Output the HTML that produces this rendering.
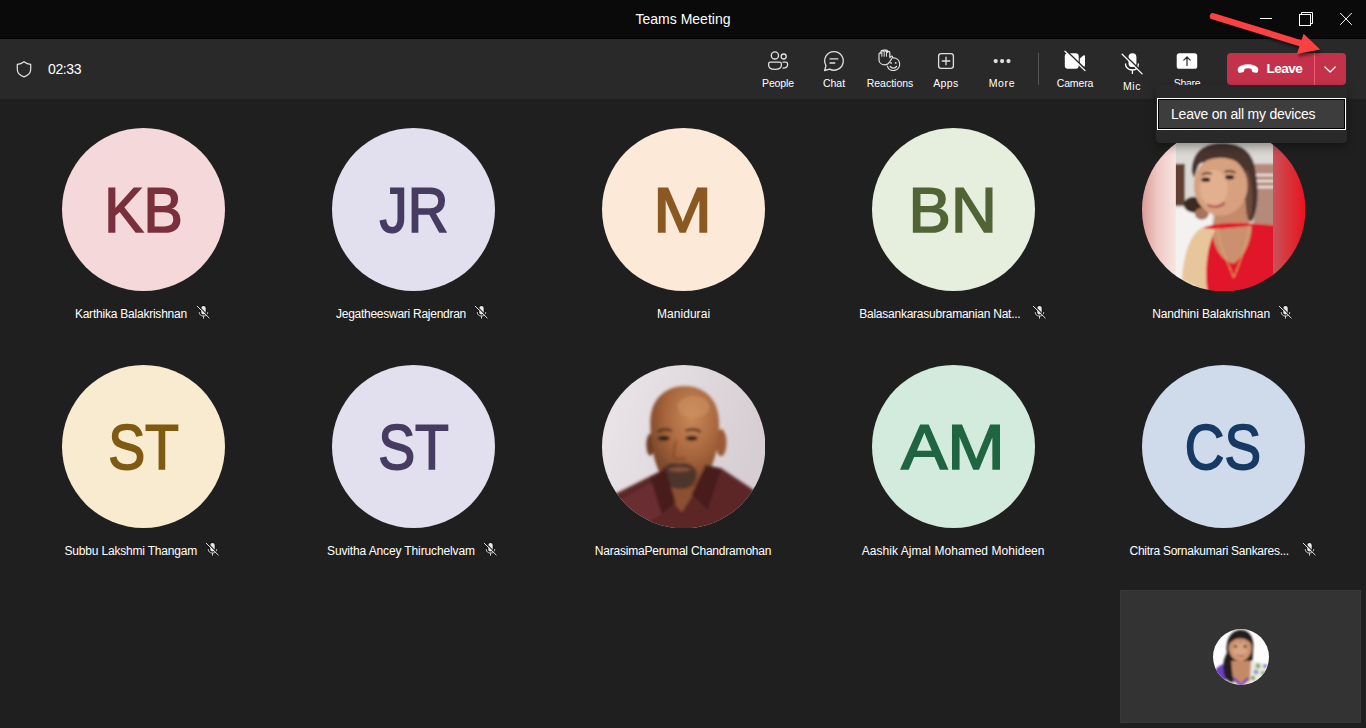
<!DOCTYPE html>
<html lang="en">
<head>
<meta charset="utf-8">
<title>Teams Meeting</title>
<style>
*{box-sizing:border-box;margin:0;padding:0}
html,body{width:1366px;height:728px;overflow:hidden;background:#1f1f1f;font-family:"Liberation Sans",sans-serif;color:#fff}
.abs{position:absolute}
#titlebar{left:0;top:0;width:1366px;height:39px;background:#0a0a0a;border-bottom:1px solid #000}
#title{left:583px;top:10px;width:200px;text-align:center;font-size:14px;line-height:18px;color:#fff;white-space:nowrap}
#toolbar{left:0;top:39px;width:1366px;height:60px;background:#292929}
#timer{left:48px;top:60px;letter-spacing:-0.4px;font-size:14px;line-height:18px;color:#fff;white-space:nowrap}
.tlabel{top:76px;width:80px;text-align:center;font-size:10.5px;line-height:14px;color:#fff;white-space:nowrap}
.av{width:163.4px;height:163.4px;border-radius:50%;overflow:hidden;text-align:center;font-size:63.5px;line-height:163.8px;white-space:nowrap;-webkit-text-stroke:1.7px currentColor;text-rendering:geometricPrecision}
.nm{font-size:12px;line-height:16px;color:#fff;white-space:nowrap}
</style>
</head>
<body>
<div id="titlebar" class="abs"></div>
<div id="title" class="abs">Teams Meeting</div>
<div id="toolbar" class="abs"></div>
<div id="timer" class="abs">02:33</div>


<!-- top icons -->
<svg class="abs" style="left:0;top:0" width="1366" height="100" viewBox="0 0 1366 100" fill="none" stroke="#fff" stroke-width="1.3" stroke-linecap="round" stroke-linejoin="round">
  <!-- shield -->
  <path d="M24 61.7C21.9 63.4 19.6 64.2 17.3 64.4V69.3C17.3 73 19.8 75.6 24 76.9C28.2 75.6 30.7 73 30.7 69.3V64.4C28.4 64.2 26.1 63.4 24 61.7Z" stroke="#e6e6e6" stroke-width="1.2"/>
  <!-- people -->
  <g stroke="#e0e0e0">
    <circle cx="774.9" cy="55.4" r="3.6"/>
    <circle cx="783.7" cy="56.5" r="2.5"/>
    <path d="M770.2 62.2H779.6C780.6 62.2 781.4 63 781.4 64V65C781.4 67.6 778.9 69.4 774.9 69.4C770.9 69.4 768.6 67.6 768.6 65V64C768.6 63 769.2 62.2 770.2 62.2Z"/>
    <path d="M783 62.2H785.8C786.8 62.2 787.6 63 787.6 64V64.4C787.6 66.6 786 68 783 68.1"/>
  </g>
  <!-- chat -->
  <g stroke="#e0e0e0">
    <path d="M834.2 51.6A9.3 9.3 0 1 1 829.6 69.1L824.6 70.5L826 65.6A9.3 9.3 0 0 1 834.2 51.6Z"/>
    <path d="M830 58.9H837.8M830 63H834.8"/>
  </g>
  <!-- reactions -->
  <g stroke="#e0e0e0" stroke-width="1.2">
    <path d="M879 60V54.2C879 52.6 881 52.4 881 53.6V51.6C881 49.9 883.2 49.9 883.2 51.4V51C883.2 49.4 885.4 49.4 885.4 50.9V51.2C885.4 49.7 887.6 49.7 887.6 51.3V52.4C887.6 51 889.8 51 889.8 52.6V57.6L891 56.4C891.8 55.6 893 56.5 892.4 57.5L889.6 62C888.6 63.8 887 64.8 885 64.8C881.4 64.8 879 62.6 879 60Z"/>
    <path d="M881.9 51.6V56.3M884.2 51V56.3M886.5 51.3V56.3" stroke-width="1"/>
    <path d="M893.4 57.9A6.3 6.3 0 1 1 887.4 66.2"/>
    <path d="M890.2 66.4C891.4 68.6 895.4 68.6 896.6 66.4" />
  </g>
  <circle cx="891" cy="62.9" r="0.9" fill="#e0e0e0" stroke="none"/>
  <circle cx="895.7" cy="62.9" r="0.9" fill="#e0e0e0" stroke="none"/>
  <!-- apps -->
  <g stroke="#e0e0e0">
    <rect x="938.6" y="53.6" width="14.8" height="14.8" rx="2.6"/>
    <path d="M946 57.2V64.8M942.2 61H949.8"/>
  </g>
  <!-- more -->
  <g fill="#e0e0e0" stroke="none">
    <circle cx="995.7" cy="61.1" r="2.1"/><circle cx="1002.1" cy="61.1" r="2.1"/><circle cx="1008.5" cy="61.1" r="2.1"/>
  </g>
  <!-- divider -->
  <rect x="1038" y="53" width="1" height="32" fill="#555" stroke="none"/>
  <!-- camera -->
  <g stroke="none" fill="#fff">
    <rect x="1064.8" y="53.2" width="13.9" height="15.6" rx="3"/>
    <path d="M1079.8 58.6L1083.4 55.6C1084.1 55 1085 55.5 1085 56.4V65.6C1085 66.5 1084.1 67 1083.4 66.4L1079.8 63.4Z"/>
  </g>
  <path d="M1066 50.4L1086 69.7" stroke="#292929" stroke-width="1.5" stroke-linecap="butt"/>
  <path d="M1065 51.3L1085 70.6" stroke="#fff" stroke-width="1.3"/>
  <!-- mic -->
  <g transform="translate(0,0)">
    <rect x="1128.5" y="53.3" width="7.9" height="13.8" rx="3.95" fill="#fff" stroke="none"/>
    <path d="M1125.5 63.9C1125.5 67.4 1128.4 70 1132.4 70C1136.4 70 1138.3 67.4 1138.3 63.9" stroke="#fff" stroke-width="1.3"/>
    <path d="M1132.4 70V73.4" stroke="#fff" stroke-width="1.3"/>
    <path d="M1123.1 53.4L1143.1 73" stroke="#292929" stroke-width="1.5" stroke-linecap="butt"/>
    <path d="M1122.2 54.3L1142.1 73.9" stroke="#fff" stroke-width="1.3"/>
  </g>
  <!-- share -->
  <rect x="1176.7" y="53.2" width="20.5" height="15.6" rx="2.6" fill="#fff" stroke="none"/>
  <path d="M1187 65.4V57.2M1183.8 60.2L1187 57L1190.2 60.2" stroke="#292929" stroke-width="1.2"/>
</svg>

<!-- toolbar labels -->
<div class="abs tlabel" style="left:738px;letter-spacing:-.12px">People</div>
<div class="abs tlabel" style="left:794px">Chat</div>
<div class="abs tlabel" style="left:850px">Reactions</div>
<div class="abs tlabel" style="left:906px;letter-spacing:.4px">Apps</div>
<div class="abs tlabel" style="left:962px;letter-spacing:.7px">More</div>
<div class="abs tlabel" style="left:1035px;letter-spacing:-.12px">Camera</div>
<div class="abs tlabel" style="left:1092px;top:79px;letter-spacing:.5px">Mic</div>
<div class="abs tlabel" style="left:1147px;letter-spacing:-.3px">Share</div>

<!-- avatars row 1 -->
<div class="abs av" style="left:61.9px;top:127.55px;background:#f4d8da;color:#7a303c"><span style="display:inline-block;transform:translate(0.06px,1.65px) scale(0.9263,1) rotate(0.02deg)">KB</span></div>
<div class="abs av" style="left:331.9px;top:127.55px;background:#e2dfee;color:#463c62"><span style="display:inline-block;transform:translate(0.14px,1.65px) scale(0.8871,1) rotate(0.02deg)">JR</span></div>
<div class="abs av" style="left:601.9px;top:127.55px;background:#fce9d7;color:#8a5922"><span style="display:inline-block;transform:translate(-0.81px,1.65px) scale(1.1175,1) rotate(0.02deg)">M</span></div>
<div class="abs av" style="left:871.9px;top:127.55px;background:#e6eedd;color:#516435"><span style="display:inline-block;transform:translate(-0.44px,1.65px) scale(0.9995,1) rotate(0.02deg)">BN</span></div>
<!-- avatars row 2 -->
<div class="abs av" style="left:61.9px;top:364.55px;background:#f8ebcf;color:#7e5a12"><span style="display:inline-block;transform:translate(-0.02px,1.65px) scale(0.8728,1) rotate(0.02deg)">ST</span></div>
<div class="abs av" style="left:331.9px;top:364.55px;background:#e2dfee;color:#463c61"><span style="display:inline-block;transform:translate(-0.02px,1.65px) scale(0.8725,1) rotate(0.02deg)">ST</span></div>
<div class="abs av" style="left:871.9px;top:364.55px;background:#d3ebdd;color:#1f6541"><span style="display:inline-block;transform:translate(-0.54px,1.65px) scale(1.0865,1) rotate(0.02deg)">AM</span></div>
<div class="abs av" style="left:1141.9px;top:364.55px;background:#cfdbeb;color:#163a63"><span style="display:inline-block;transform:translate(-0.17px,1.65px) scale(0.8636,1) rotate(0.02deg)">CS</span></div>


<!-- Nandhini photo -->
<svg class="abs" style="left:1141.9px;top:127.55px" width="163.4" height="163.4" viewBox="0 0 164 164">
  <defs>
    <clipPath id="cpN"><circle cx="82" cy="82" r="82"/></clipPath>
    <clipPath id="cpNs"><rect x="34" y="0" width="97.500" height="164"/></clipPath>
    <linearGradient id="gNl" x1="0" x2="1" y1="0" y2="0"><stop offset="0" stop-color="#dc9c98"/><stop offset=".45" stop-color="#efc9c4"/><stop offset="1" stop-color="#f8e6e1"/></linearGradient>
    <linearGradient id="gNr" x1="0" x2="1" y1="0" y2="0"><stop offset="0" stop-color="#c8545a"/><stop offset=".5" stop-color="#d9323a"/><stop offset="1" stop-color="#ea121e"/></linearGradient>
    <filter id="bN" x="-5%" y="-5%" width="110%" height="110%"><feGaussianBlur stdDeviation="1.3"/></filter>
  </defs>
  <g clip-path="url(#cpN)">
    <rect x="0" y="0" width="35" height="164" fill="url(#gNl)"/>
    <rect x="131" y="0" width="33" height="164" fill="url(#gNr)"/>
    <g clip-path="url(#cpNs)"><g filter="url(#bN)">
      <rect x="30" y="-4" width="106" height="172" fill="#dcd8d3"/>
      <rect x="112" y="36" width="24" height="66" fill="#b58a7c"/>
      <rect x="112" y="46" width="24" height="2.500" fill="#e9e0da"/><rect x="112" y="52" width="24" height="2.500" fill="#e9e0da"/><rect x="112" y="58" width="24" height="2.500" fill="#e9e0da"/>
      <rect x="30" y="36" width="13" height="42" fill="#5f3f33"/>
      <rect x="30" y="80" width="40" height="90" fill="#f3f2f0"/>
      <ellipse cx="52" cy="77" rx="10" ry="8" fill="#3a2a24"/>
      <ellipse cx="60" cy="86" rx="7" ry="6" fill="#a8735c"/>
      <path d="M50 44C50 24 62 15 80 15C100 15 112 24 114 44C118 66 116 84 110 94L100 90L104 46L58 34L52 50Z" fill="#4a352d"/>
      <path d="M104 40C112 50 112 80 108 92L100 88Z" fill="#6b4a3c"/>
      <path d="M72 80C74 92 71 100 66 106L112 102C106 95 104 85 104 72Z" fill="#c48a69"/>
      <ellipse cx="79" cy="58" rx="27" ry="30" fill="#d7a07f"/>
      <ellipse cx="72" cy="60" rx="14" ry="18" fill="#e2b08f"/>
      <path d="M52 42C56 28 70 20 84 21C98 22 106 30 106 44C100 34 88 29 76 30C64 31 56 36 52 42Z" fill="#4a352d"/>
      <ellipse cx="64" cy="52" rx="4.500" ry="2.200" fill="#2e1d18"/><ellipse cx="88" cy="49.500" rx="4.500" ry="2.200" fill="#2e1d18"/>
      <path d="M60 47C63 45 67 45 70 46M83 44C87 43 91 43 94 45" stroke="#3a261f" stroke-width="1.600" fill="none"/>
      <path d="M66 77C70 80 78 80 83 75" stroke="#b0605c" stroke-width="2.600" fill="none"/>
      <path d="M58 102C70 94 100 94 136 98V168H56Z" fill="#e2172a"/>
      <path d="M70 102C72 124 82 134 92 136C102 130 110 114 110 98Z" fill="#cb9070"/>
      <path d="M76 100C78 120 86 134 92 150" stroke="#d8b06a" stroke-width="1" fill="none"/><path d="M108 98C104 120 98 136 92 150" stroke="#d8b06a" stroke-width="1" fill="none"/>
      <path d="M60 100C50 106 42 122 40 152L66 166C62 142 66 116 74 102Z" fill="#e8c69c"/>
    </g></g>
  </g>
</svg>

<!-- Narasima photo -->
<svg class="abs" style="left:601.9px;top:364.55px" width="163.4" height="163.4" viewBox="0 0 164 164">
  <defs>
    <clipPath id="cpP"><circle cx="82" cy="82" r="82"/></clipPath>
    <linearGradient id="gPb" x1="0" x2="1" y1="0" y2="0.300"><stop offset="0" stop-color="#ece6ea"/><stop offset="1" stop-color="#d6ced3"/></linearGradient>
    <radialGradient id="gPh" cx=".6" cy=".3" r=".75"><stop offset="0" stop-color="#c98958"/><stop offset=".5" stop-color="#a8663d"/><stop offset="1" stop-color="#6c3d24"/></radialGradient>
    <filter id="bP" x="-5%" y="-5%" width="110%" height="110%"><feGaussianBlur stdDeviation="1.400"/></filter>
  </defs>
  <g clip-path="url(#cpP)">
    <rect width="164" height="164" fill="url(#gPb)"/>
    <g filter="url(#bP)">
      <path d="M8 132L48 112L66 106L82 120L104 102L120 104L156 128L172 172H-8Z" fill="#5c2528"/>
      <path d="M10 140L50 118L60 150L20 170Z" fill="#6a2d30"/>
      <path d="M64 104L70 136L80 148L94 126L102 100Z" fill="#8c4f30"/>
      <ellipse cx="119.500" cy="78" rx="5.500" ry="13.500" fill="#9a5a34"/>
      <ellipse cx="48.500" cy="80" rx="4" ry="11" fill="#6c3d24"/>
      <path d="M83 21C104 21 117.500 36 117.500 58C117.500 76 115 92 108 106C101 118 92 124.500 80 124.500C68 124.500 61 117 56 104C51 92 48.500 74 48.500 58C48.500 36 62 21 83 21Z" fill="url(#gPh)"/>
      <ellipse cx="92" cy="42" rx="16" ry="11" fill="#d09464" opacity=".55"/>
      <ellipse cx="62" cy="73.500" rx="6" ry="2.600" fill="#2a1710"/><ellipse cx="90" cy="73.500" rx="6" ry="2.600" fill="#2a1710"/>
      <path d="M56 67C60 64 67 64 70 66M84 66C88 64 95 64 99 67" stroke="#3a2116" stroke-width="2.200" fill="none"/>
      <path d="M74 76C73 84 71 90 72 93C75 95 81 95 84 93" stroke="#7a4528" stroke-width="1.600" fill="none"/>
      <path d="M60 108C61 100 70 97 77 99C84 97 93 100 95 108C95 118 89 124.500 79 124.500C68 124.500 60 118 60 108Z" fill="#4e342a"/>
      <path d="M66 105C72 101.500 84 101.500 90 105C84 108 72 108 66 105Z" fill="#8a5040"/>
      <path d="M48 112L64 104L74 138L60 150Z" fill="#4a1c1f"/><path d="M120 104L104 100L90 130L106 146Z" fill="#4a1c1f"/>
    </g>
  </g>
</svg>

<!-- names -->
<div class="abs nm" id="n1" style="left:74.9px;top:306px;letter-spacing:-0.222px">Karthika Balakrishnan</div>
<div class="abs nm" id="n2" style="left:336.0px;top:306px;letter-spacing:-0.263px">Jegatheeswari Rajendran</div>
<div class="abs nm" id="n3" style="left:656.9px;top:306px;letter-spacing:0.062px">Manidurai</div>
<div class="abs nm" id="n4" style="left:859.2px;top:306px;letter-spacing:-0.235px">Balasankarasubramanian Nat...</div>
<div class="abs nm" id="n5" style="left:1152.2px;top:306px;letter-spacing:-0.109px">Nandhini Balakrishnan</div>
<div class="abs nm" id="n6" style="left:64.5px;top:543px;letter-spacing:-0.187px">Subbu Lakshmi Thangam</div>
<div class="abs nm" id="n7" style="left:327.0px;top:543px;letter-spacing:-0.128px">Suvitha Ancey Thiruchelvam</div>
<div class="abs nm" id="n8" style="left:594.8px;top:543px;letter-spacing:-0.200px">NarasimaPerumal Chandramohan</div>
<div class="abs nm" id="n9" style="left:861.8px;top:543px;letter-spacing:0.045px">Aashik Ajmal Mohamed Mohideen</div>
<div class="abs nm" id="n10" style="left:1129.5px;top:543px;letter-spacing:-0.269px">Chitra Sornakumari Sankares...</div>

<!-- self view -->
<div class="abs" style="left:1120px;top:590px;width:241px;height:133px;background:#333;border:1px solid #383838"></div>


<!-- self avatar -->
<svg class="abs" style="left:1213px;top:628.5px" width="56" height="56" viewBox="0 0 56 56">
  <defs><clipPath id="cpS"><circle cx="28" cy="28" r="28"/></clipPath>
  <filter id="bS" x="-5%" y="-5%" width="110%" height="110%"><feGaussianBlur stdDeviation=".9"/></filter></defs>
  <g clip-path="url(#cpS)">
    <rect width="56" height="56" fill="#fdfdfd"/>
    <g filter="url(#bS)">
      <path d="M14 24C12 8 20 1 28 1C36 1 42 8 40 22L39.500 32H16Z" fill="#231a1d"/>
      <path d="M0 44C4 38 8 35 12 35L14 50L6 54Z" fill="#6d42c0"/>
      <path d="M36 33C42 31 50 33 56 38V56H36C38 50 38 42 36 33Z" fill="#e6ebe2"/>
      <circle cx="45" cy="37" r="2.400" fill="#84a862"/><circle cx="40" cy="49" r="2.200" fill="#84a862"/><circle cx="50" cy="44" r="2" fill="#84a862"/><circle cx="43" cy="43" r="2.400" fill="#9c8ed6"/><circle cx="52" cy="37" r="1.800" fill="#7a55c8"/>
      <path d="M18 32H38L37 52L28 57L19 52Z" fill="#c48a67"/>
      <path d="M20 49C24 51 26 54 27.500 57M35 49C32 51 30 54 28.500 57" stroke="#6d42c0" stroke-width="2.200" fill="none"/>
      <ellipse cx="27.200" cy="19" rx="11.300" ry="13.200" fill="#cd9470"/>
      <ellipse cx="27" cy="21" rx="7" ry="8" fill="#d9a481"/>
      <path d="M15 17C16 8 21 4 28 4C35 4 39 8 39.500 17C36 11 31 9 27 9.500C22 9.500 18 12 15 17Z" fill="#231a1d"/>
      <path d="M14 24C10 30 9 40 12 48C14 52 18 54 21 53C19 46 19 38 18 30Z" fill="#231a1d"/>
      <ellipse cx="22.500" cy="17.500" rx="2" ry="1" fill="#3a2620"/><ellipse cx="32" cy="17.500" rx="2" ry="1" fill="#3a2620"/>
      <circle cx="27.300" cy="13.500" r=".7" fill="#9a2020"/>
      <path d="M23.500 26C26 27.300 29 27.300 31 26" stroke="#a8574f" stroke-width="1.100" fill="none"/>
    </g>
  </g>
</svg>

<!-- muted mics -->
<svg class="abs" style="left:193.6px;top:303.3px" width="20" height="20" viewBox="193.7 303.7 20 20" fill="none">
  <g stroke="#141414" stroke-width="2.4" stroke-linecap="round" opacity=".7">
    <rect x="201" y="306.6" width="4.4" height="8.6" rx="2.2" fill="#141414"/>
    <path d="M198.9 313.2C198.9 315.4 200.7 316.8 203.2 316.8C205.700 316.8 207.5 315.4 207.5 313.2M203.2 316.8V319"/>
    <path d="M196.900 306.900L208.900 318.700"/>
  </g>
  <rect x="201" y="306.600" width="4.400" height="8.600" rx="2.200" fill="#e8e8e8"/>
  <path d="M198.900 313.200C198.900 315.400 200.700 316.800 203.200 316.800C205.700 316.800 207.500 315.400 207.500 313.200M203.200 316.800V319" stroke="#cfcfcf" stroke-width="1.000" stroke-linecap="round"/>
  <path d="M197.700 306.300L209.600 318" stroke="#1f1f1f" stroke-width="1.100"/>
  <path d="M196.900 306.900L208.900 318.700" stroke="#e8e8e8" stroke-width="1.000" stroke-linecap="round"/>
</svg>
<svg class="abs" style="left:472.4px;top:303.3px" width="20" height="20" viewBox="193.7 303.7 20 20" fill="none">
  <g stroke="#141414" stroke-width="2.4" stroke-linecap="round" opacity=".7">
    <rect x="201" y="306.6" width="4.4" height="8.6" rx="2.2" fill="#141414"/>
    <path d="M198.9 313.2C198.9 315.4 200.7 316.8 203.2 316.8C205.700 316.8 207.5 315.4 207.5 313.2M203.2 316.8V319"/>
    <path d="M196.900 306.900L208.900 318.700"/>
  </g>
  <rect x="201" y="306.600" width="4.400" height="8.600" rx="2.200" fill="#e8e8e8"/>
  <path d="M198.900 313.200C198.900 315.400 200.700 316.800 203.200 316.800C205.700 316.800 207.500 315.400 207.500 313.200M203.200 316.800V319" stroke="#cfcfcf" stroke-width="1.000" stroke-linecap="round"/>
  <path d="M197.700 306.300L209.600 318" stroke="#1f1f1f" stroke-width="1.100"/>
  <path d="M196.900 306.900L208.900 318.700" stroke="#e8e8e8" stroke-width="1.000" stroke-linecap="round"/>
</svg>
<svg class="abs" style="left:1030.3px;top:303.3px" width="20" height="20" viewBox="193.7 303.7 20 20" fill="none">
  <g stroke="#141414" stroke-width="2.4" stroke-linecap="round" opacity=".7">
    <rect x="201" y="306.6" width="4.4" height="8.6" rx="2.2" fill="#141414"/>
    <path d="M198.9 313.2C198.9 315.4 200.7 316.8 203.2 316.8C205.700 316.8 207.5 315.4 207.5 313.2M203.2 316.8V319"/>
    <path d="M196.900 306.900L208.900 318.700"/>
  </g>
  <rect x="201" y="306.600" width="4.400" height="8.600" rx="2.200" fill="#e8e8e8"/>
  <path d="M198.900 313.200C198.900 315.400 200.700 316.800 203.200 316.800C205.700 316.800 207.500 315.400 207.500 313.200M203.200 316.800V319" stroke="#cfcfcf" stroke-width="1.000" stroke-linecap="round"/>
  <path d="M197.700 306.300L209.600 318" stroke="#1f1f1f" stroke-width="1.100"/>
  <path d="M196.900 306.900L208.900 318.700" stroke="#e8e8e8" stroke-width="1.000" stroke-linecap="round"/>
</svg>
<svg class="abs" style="left:1276.3px;top:303.3px" width="20" height="20" viewBox="193.7 303.7 20 20" fill="none">
  <g stroke="#141414" stroke-width="2.4" stroke-linecap="round" opacity=".7">
    <rect x="201" y="306.6" width="4.4" height="8.6" rx="2.2" fill="#141414"/>
    <path d="M198.9 313.2C198.9 315.4 200.7 316.8 203.2 316.8C205.700 316.8 207.5 315.4 207.5 313.2M203.2 316.8V319"/>
    <path d="M196.900 306.900L208.900 318.700"/>
  </g>
  <rect x="201" y="306.600" width="4.400" height="8.600" rx="2.200" fill="#e8e8e8"/>
  <path d="M198.900 313.200C198.900 315.400 200.700 316.800 203.200 316.800C205.700 316.800 207.500 315.400 207.500 313.200M203.200 316.800V319" stroke="#cfcfcf" stroke-width="1.000" stroke-linecap="round"/>
  <path d="M197.700 306.300L209.600 318" stroke="#1f1f1f" stroke-width="1.100"/>
  <path d="M196.900 306.900L208.900 318.700" stroke="#e8e8e8" stroke-width="1.000" stroke-linecap="round"/>
</svg>
<svg class="abs" style="left:203.3px;top:540.3px" width="20" height="20" viewBox="193.7 303.7 20 20" fill="none">
  <g stroke="#141414" stroke-width="2.4" stroke-linecap="round" opacity=".7">
    <rect x="201" y="306.6" width="4.4" height="8.6" rx="2.2" fill="#141414"/>
    <path d="M198.9 313.2C198.9 315.4 200.7 316.8 203.2 316.8C205.700 316.8 207.5 315.4 207.5 313.2M203.2 316.8V319"/>
    <path d="M196.900 306.900L208.900 318.700"/>
  </g>
  <rect x="201" y="306.600" width="4.400" height="8.600" rx="2.200" fill="#e8e8e8"/>
  <path d="M198.900 313.200C198.900 315.400 200.700 316.800 203.200 316.800C205.700 316.800 207.500 315.400 207.500 313.200M203.200 316.800V319" stroke="#cfcfcf" stroke-width="1.000" stroke-linecap="round"/>
  <path d="M197.700 306.300L209.600 318" stroke="#1f1f1f" stroke-width="1.100"/>
  <path d="M196.900 306.900L208.900 318.700" stroke="#e8e8e8" stroke-width="1.000" stroke-linecap="round"/>
</svg>
<svg class="abs" style="left:481.0px;top:540.3px" width="20" height="20" viewBox="193.7 303.7 20 20" fill="none">
  <g stroke="#141414" stroke-width="2.4" stroke-linecap="round" opacity=".7">
    <rect x="201" y="306.6" width="4.4" height="8.6" rx="2.2" fill="#141414"/>
    <path d="M198.9 313.2C198.9 315.4 200.7 316.8 203.2 316.8C205.700 316.8 207.5 315.4 207.5 313.2M203.2 316.8V319"/>
    <path d="M196.900 306.900L208.900 318.700"/>
  </g>
  <rect x="201" y="306.600" width="4.400" height="8.600" rx="2.200" fill="#e8e8e8"/>
  <path d="M198.900 313.200C198.900 315.400 200.700 316.800 203.200 316.800C205.700 316.800 207.500 315.400 207.500 313.200M203.200 316.800V319" stroke="#cfcfcf" stroke-width="1.000" stroke-linecap="round"/>
  <path d="M197.700 306.300L209.600 318" stroke="#1f1f1f" stroke-width="1.100"/>
  <path d="M196.900 306.900L208.900 318.700" stroke="#e8e8e8" stroke-width="1.000" stroke-linecap="round"/>
</svg>
<svg class="abs" style="left:1300.4px;top:540.3px" width="20" height="20" viewBox="193.7 303.7 20 20" fill="none">
  <g stroke="#141414" stroke-width="2.4" stroke-linecap="round" opacity=".7">
    <rect x="201" y="306.6" width="4.4" height="8.6" rx="2.2" fill="#141414"/>
    <path d="M198.9 313.2C198.9 315.4 200.7 316.8 203.2 316.8C205.700 316.8 207.5 315.4 207.5 313.2M203.2 316.8V319"/>
    <path d="M196.900 306.900L208.900 318.700"/>
  </g>
  <rect x="201" y="306.600" width="4.400" height="8.600" rx="2.200" fill="#e8e8e8"/>
  <path d="M198.900 313.200C198.900 315.400 200.700 316.800 203.200 316.800C205.700 316.800 207.500 315.400 207.500 313.200M203.200 316.800V319" stroke="#cfcfcf" stroke-width="1.000" stroke-linecap="round"/>
  <path d="M197.700 306.300L209.600 318" stroke="#1f1f1f" stroke-width="1.100"/>
  <path d="M196.900 306.900L208.900 318.700" stroke="#e8e8e8" stroke-width="1.000" stroke-linecap="round"/>
</svg>

<!-- leave button -->
<div class="abs" style="left:1227px;top:53px;width:119px;height:32px;background:#c4314b;border-radius:4px"></div>
<div class="abs" style="left:1314px;top:53px;width:1px;height:32px;background:#ec5c74"></div>
<div class="abs" id="leave" style="left:1266.5px;top:60px;letter-spacing:-0.55px;font-size:13.6px;line-height:18px;font-weight:bold;color:#fff">Leave</div>


<svg class="abs" style="left:1227px;top:53px" width="119" height="32" viewBox="1227 53 119 32" fill="none">
  <path d="M1248 64.3C1252.4 64.3 1256 65.7 1257.6 67.6C1258.5 68.7 1258.4 70.1 1258 71.4C1257.7 72.4 1256.8 73 1255.8 72.8L1253.4 72.3C1252.6 72.1 1252 71.5 1251.8 70.7L1251.4 68.8C1250.4 68.4 1249.3 68.2 1248 68.2C1246.7 68.2 1245.6 68.4 1244.6 68.8L1244.2 70.7C1244 71.5 1243.4 72.1 1242.6 72.3L1240.2 72.8C1239.2 73 1238.3 72.4 1238 71.4C1237.6 70.1 1237.5 68.7 1238.4 67.6C1240 65.7 1243.6 64.3 1248 64.3Z" fill="#fff"/>
  <path d="M1325 67L1330.1 72L1335.2 67" stroke="#fff" stroke-width="1.2" stroke-linecap="round" stroke-linejoin="round"/>
</svg>

<!-- dropdown -->
<div class="abs" style="left:1156px;top:85px;width:191px;height:58px;background:#292929;border-radius:4px;box-shadow:0 4px 10px rgba(0,0,0,.35)"></div>
<div class="abs" style="left:1157px;top:98px;width:189px;height:32px;background:#3d3d3d;border:1px solid #fff;box-shadow:inset 0 0 0 1px #000"></div>
<div class="abs" id="leaveall" style="left:1171px;top:105px;letter-spacing:-0.22px;font-size:14px;line-height:18px;color:#fff;white-space:nowrap">Leave on all my devices</div>

<!-- window controls and arrow -->
<svg class="abs" style="left:1190px;top:0" width="176" height="100" viewBox="1190 0 176 100" fill="none">
  <defs><filter id="ash" x="-10%" y="-30%" width="120%" height="170%"><feGaussianBlur stdDeviation="1.6"/></filter></defs>
  <path d="M1260 18.5H1272" stroke="#fff" stroke-width="1"/>
  <rect x="1299.500" y="14.500" width="11" height="11" stroke="#fff" stroke-width="1"/>
  <path d="M1301.500 14.500V12.500H1312.500V23.500H1310.500" stroke="#fff" stroke-width="1"/>
  <path d="M1340.2 13L1351.8 24.8M1351.8 13L1340.2 24.8" stroke="#fff" stroke-width="1"/>
  <!-- arrow shadow -->
  <g filter="url(#ash)" opacity=".45" transform="translate(1,3)">
    <path d="M1213 16.3L1303 44" stroke="#000" stroke-width="6.4" stroke-linecap="round"/>
    <path d="M1320.200 49.600L1303.600 33.800L1296.900 53.900Z" fill="#000"/>
  </g>
  <path d="M1213 16.3L1303 44" stroke="#fb4141" stroke-width="6.4" stroke-linecap="round"/>
  <path d="M1320.200 49.600L1303.600 33.800L1296.900 53.900Z" fill="#fb4141"/>
</svg>
</body>
</html>
